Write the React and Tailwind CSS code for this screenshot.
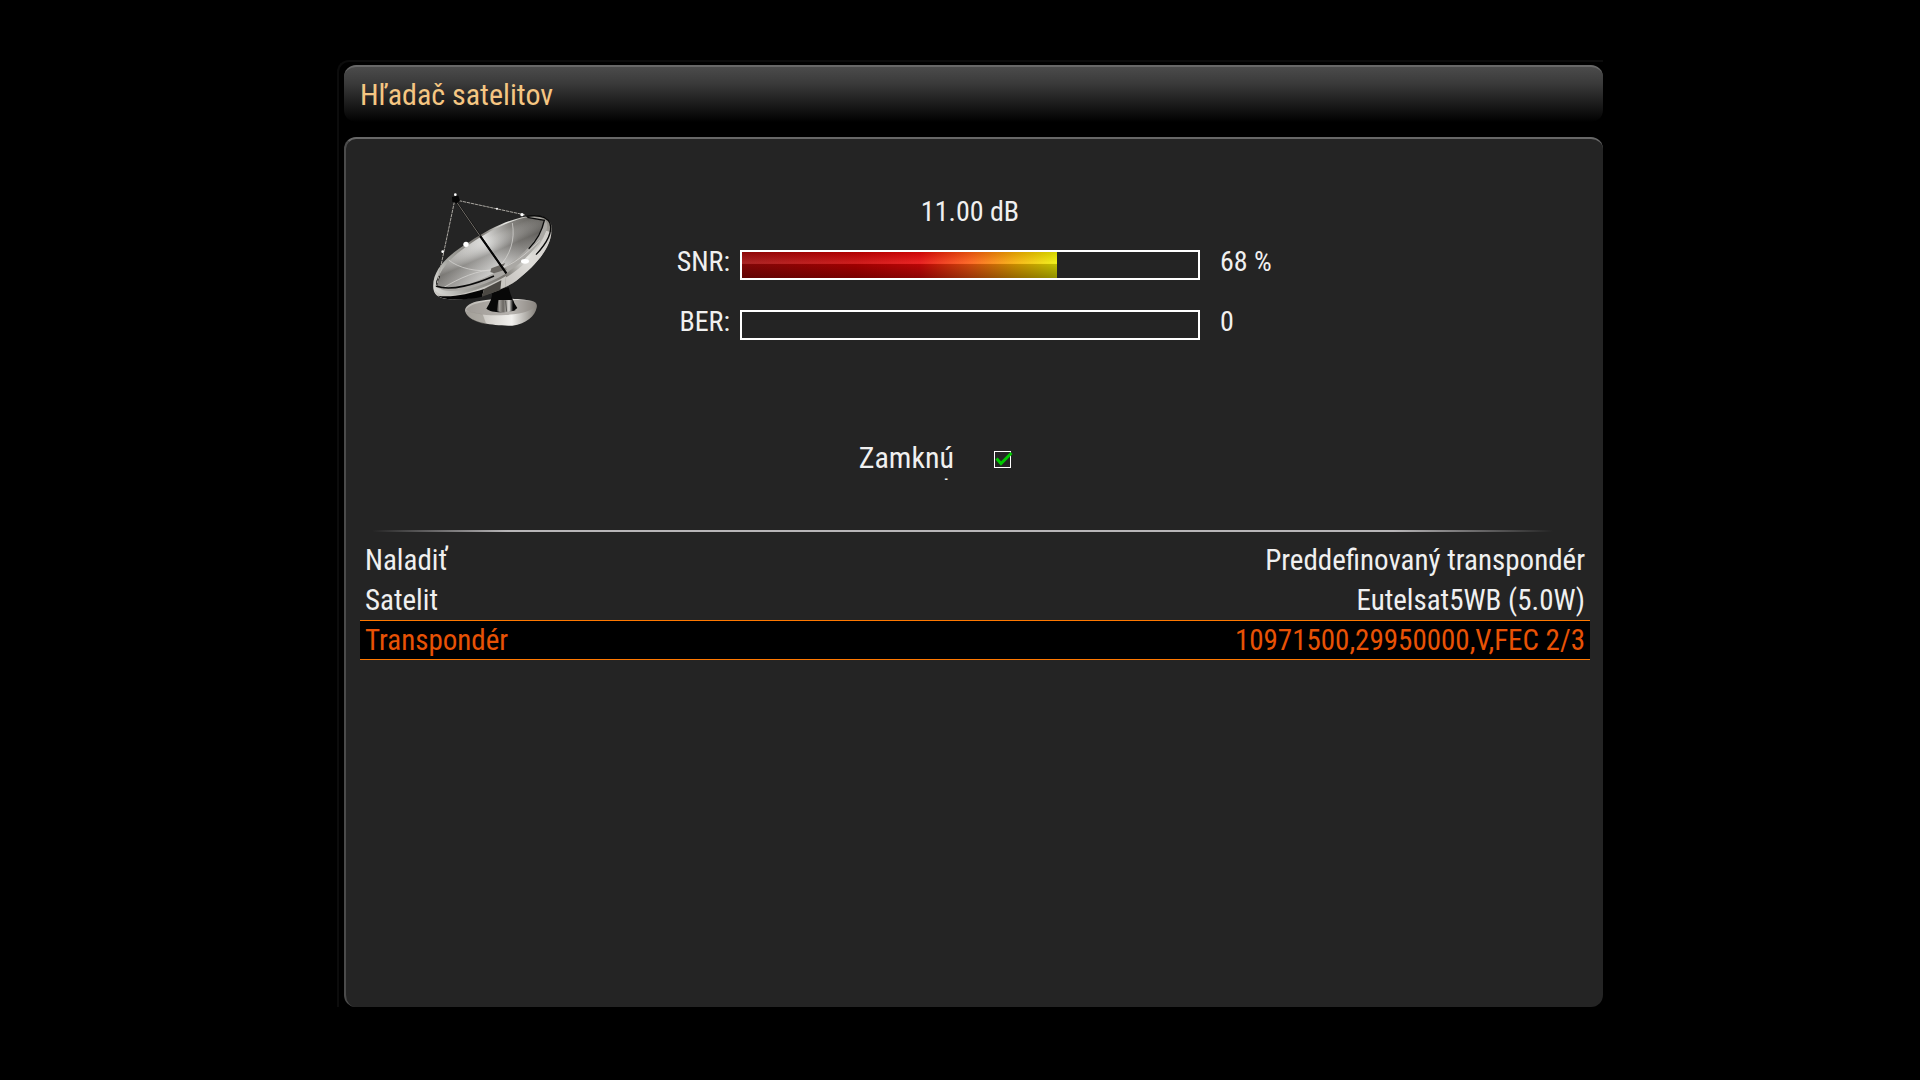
import React, { useState } from "react";

const settings = [
  { label: "Naladiť", value: "Preddefinovaný transpondér" },
  { label: "Satelit", value: "Eutelsat5WB (5.0W)" },
  { label: "Transpondér", value: "10971500,29950000,V,FEC 2/3" },
];

const DishIcon = () => (
  <svg viewBox="0 0 480 480" className="w-40 h-40 shrink-0" aria-hidden="true">
    <defs>
      <linearGradient id="rim" x1="80" y1="340" x2="420" y2="130" gradientUnits="userSpaceOnUse">
        <stop offset="0" stopColor="#d8d8d4" />
        <stop offset="0.2" stopColor="#a5a5a0" />
        <stop offset="0.5" stopColor="#76736e" />
        <stop offset="0.72" stopColor="#e8e8e4" />
        <stop offset="1" stopColor="#8d8a84" />
      </linearGradient>
      <linearGradient id="bowl" x1="90" y1="300" x2="400" y2="130" gradientUnits="userSpaceOnUse">
        <stop offset="0" stopColor="#8c8a86" />
        <stop offset="0.3" stopColor="#c2c1be" />
        <stop offset="0.5" stopColor="#dededc" />
        <stop offset="0.75" stopColor="#85837f" />
        <stop offset="1" stopColor="#5d5b57" />
      </linearGradient>
      <linearGradient id="shade" x1="180" y1="130" x2="260" y2="310" gradientUnits="userSpaceOnUse">
        <stop offset="0.3" stopColor="#fff" stopOpacity="0" />
        <stop offset="0.55" stopColor="#5d5b58" stopOpacity="0.45" />
        <stop offset="1" stopColor="#fff" stopOpacity="0.3" />
      </linearGradient>
      <linearGradient id="base" x1="165" y1="0" x2="381" y2="0" gradientUnits="userSpaceOnUse">
        <stop offset="0" stopColor="#b5b2ad" />
        <stop offset="0.35" stopColor="#d7d4cf" />
        <stop offset="0.65" stopColor="#f2f1ee" />
        <stop offset="1" stopColor="#817d77" />
      </linearGradient>
      <linearGradient id="stem" x1="230" y1="0" x2="320" y2="0" gradientUnits="userSpaceOnUse">
        <stop offset="0.32" stopColor="#080808" />
        <stop offset="0.42" stopColor="#a3a09b" />
        <stop offset="0.55" stopColor="#6a6762" />
        <stop offset="0.75" stopColor="#dad8d4" />
        <stop offset="0.88" stopColor="#080808" />
      </linearGradient>
    </defs>
    <path d="M165 390C168 376 184 367 208 363C262 353 330 356 364 362C377 365 383 371 380 383C375 407 350 431 307 437C253 439 191 427 175 409C169 402 165 396 165 390Z" fill="url(#base)" />
    <path d="M168 390C180 370 230 362 270 360C320 358 368 362 378 372C372 390 340 403 286 405C235 408 185 402 168 390Z" fill="#8f8b85" opacity="0.6" />
    <path d="M167 393L218 403L229 433C195 426 171 414 167 393Z" fill="#8d8982" opacity="0.5" />
    <path d="M247 332L296 322C302 348 311 368 322 384C308 399 246 402 229 386C240 368 247 353 247 332Z" fill="#080808" />
    <path d="M265 360L309 360L316 391C299 398 277 398 260 394Z" fill="url(#stem)" />
    <path d="M287 362L290 395" stroke="#34322f" strokeWidth="2" />
    <path d="M70 326C64 270 115 224 178 186C246 139 322 108 372 107C410 106 431 124 424 157C422 205 376 257 319 302C263 342 169 364 111 357C84 353 73 344 70 326Z" fill="url(#rim)" />
    <path d="M73 329C89 348 128 349 164 339C215 326 241 315 288 288L286 321C224 349 151 363 108 356C84 351 75 344 73 329Z" fill="#c8c6c1" />
    <path d="M82 347C123 354 177 342 222 327L216 350C176 359 124 362 95 353Z" fill="#050505" />
    <path d="M222 327L274 301L271 330L216 350Z" fill="#4b4843" />
    <path d="M288 292C341 262 391 207 408 152L424 157C422 205 376 257 319 302C308 310 298 316 286 321Z" fill="#dcdad6" opacity="0.8" />
    <path d="M80 322C77 276 126 230 181 193C246 148 329 114 372 113C409 112 417 127 409 151C392 194 343 244 287 281C226 317 144 340 101 331Z" fill="#aaa8a4" />
    <path d="M80 318C81 275 126 228 181 191C246 146 315 117 352 112L402 122C394 161 362 202 313 240C253 288 163 323 100 326Z" fill="url(#bowl)" />
    <path d="M80 318C81 275 126 228 181 191C246 146 315 117 352 112L402 122C394 161 362 202 313 240C253 288 163 323 100 326Z" fill="url(#shade)" />
    <path d="M116 240C145 264 201 278 255 270M307 129C316 178 301 226 266 262M97 325C149 294 201 270 260 268C310 258 351 218 390 181" fill="none" stroke="#d8d7d4" strokeWidth="3" opacity="0.7" />
    <path d="M88 288C82 298 80 308 80 319C124 334 196 313 252 288" fill="none" stroke="#0a0a0a" strokeWidth="5" />
    <path d="M352 112L403 121C396 153 380 182 356 206" fill="none" stroke="#0a0a0a" strokeWidth="4" />
    <path d="M349 109C385 104 412 111 420 130C428 156 408 192 378 224" fill="none" stroke="#0a0a0a" strokeWidth="4" />
    <path d="M244 265L286 249L278 262L291 268L252 280L241 276Z" fill="#6b6863" />
    <path d="M137 62L289 280" stroke="#080808" strokeWidth="5" />
    <path d="M137 62L211 169" stroke="#77736d" strokeWidth="3" />
    <path d="M211 169L289 280" stroke="#050505" strokeWidth="6" />
    <path d="M133 66L80 318M147 62L346 105" fill="none" stroke="#aaa7a1" strokeWidth="3" strokeDasharray="10 2" />
    <path d="M126 51L145 47L150 62L140 70L127 66Z" fill="#050505" />
    <g fill="#fff">
      <circle cx="136" cy="44" r="4" />
      <circle cx="168" cy="193" r="8" />
      <circle cx="98" cy="215" r="4" />
      <circle cx="336" cy="104" r="5" />
      <circle cx="261" cy="86" r="3" />
      <ellipse cx="345" cy="244" rx="12" ry="7" />
    </g>
  </svg>
);

const Meter = ({ label, value, text }) => (
  <>
    <span className="text-right">{label}</span>
    <div role="meter" aria-label={label} aria-valuenow={value} aria-valuemin={0} aria-valuemax={100} className="mx-[10px] h-[30px] border-2 border-white">
      <div className="h-full overflow-hidden" style={{ width: `${value}%` }}>
        <div className="h-full w-[456px] bg-[linear-gradient(to_bottom,rgba(0,0,0,0.12),rgba(255,255,255,0.12)_44%,rgba(0,0,0,0.2)_46%,rgba(0,0,0,0.4)),linear-gradient(to_right,#a00808,#c80000_25%,#e80808_39%,#ff5a10_50%,#f8b000_60%,#f0f000_69%)]" />
      </div>
    </div>
    <span className="pl-[10px]">{text}</span>
  </>
);

const App = () => {
  const [locked, setLocked] = useState(true);

  return (
    <div className="min-h-screen bg-black pt-[60px] pl-[337px] pr-[317px] pb-[70px] text-[#f0f0f0] font-['Roboto_Condensed',Roboto,sans-serif]">
      <main className="border-l-2 border-t-2 border-[#0c0c0c] rounded-tl-xl pl-[5px] pt-[3px]">
        <header className="h-[57px] px-4 flex items-center rounded-xl border-t-2 border-t-[#686868] bg-[linear-gradient(to_bottom,#4b4b4b,#3a3a3a_30%,#000)]">
          <h1 className="text-[30px] leading-10 text-[#f5c682]">Hľadač satelitov</h1>
        </header>

        <section className="mt-[15px] min-h-[870px] rounded-xl border-t-2 border-l-2 border-t-[#686868] border-l-[#4b4b4b] bg-[#242424] pt-[41px] pl-[14px] pr-[13px]">
          <div className="flex pl-[50px]">
            <DishIcon />
            <div className="ml-[70px] pt-5 grid grid-cols-[90px_480px_auto] grid-rows-[20px_30px_30px] gap-y-[30px] text-[28px] leading-6">
              <span className="col-start-2 text-center">11.00 dB</span>
              <span />
              <Meter label="SNR:" value={69} text="68 %" />
              <Meter label="BER:" value={0} text="0" />
            </div>
          </div>

          <div className="mt-[100px] ml-[494px] h-10 flex gap-10">
            <label htmlFor="lock" className="w-[100px] overflow-hidden break-all text-right text-[30px] leading-[35px]">Zamknúť:</label>
            <span className="relative mt-[11px] size-[17px]">
              <input id="lock" type="checkbox" checked={locked} onChange={(e) => setLocked(e.target.checked)} className="block size-[17px] appearance-none border border-white" />
              {locked && (
                <svg viewBox="0 0 19 17" className="absolute left-0 top-0 w-[19px] h-[17px] pointer-events-none" aria-hidden="true">
                  <path d="M2.5 7.5L7 12.5L17.5 2" fill="none" stroke="#00c800" strokeWidth="3" />
                </svg>
              )}
            </span>
          </div>

          <div className="mt-[50px] h-0.5 bg-[linear-gradient(to_right,transparent_1%,#b8b6b8_12%,#b8b6b8_84%,transparent_97%)]" />

          <dl className="mt-2 text-[29px] leading-[38px]">
            {settings.map((item, i) => (
              <div key={item.label} className={`h-10 px-[5px] flex justify-between border-y ${i === 2 ? "border-[#ff7800] bg-black text-[#e85205]" : "border-transparent"}`}>
                <dt>{item.label}</dt>
                <dd>{item.value}</dd>
              </div>
            ))}
          </dl>
        </section>
      </main>
    </div>
  );
};

export default App;
